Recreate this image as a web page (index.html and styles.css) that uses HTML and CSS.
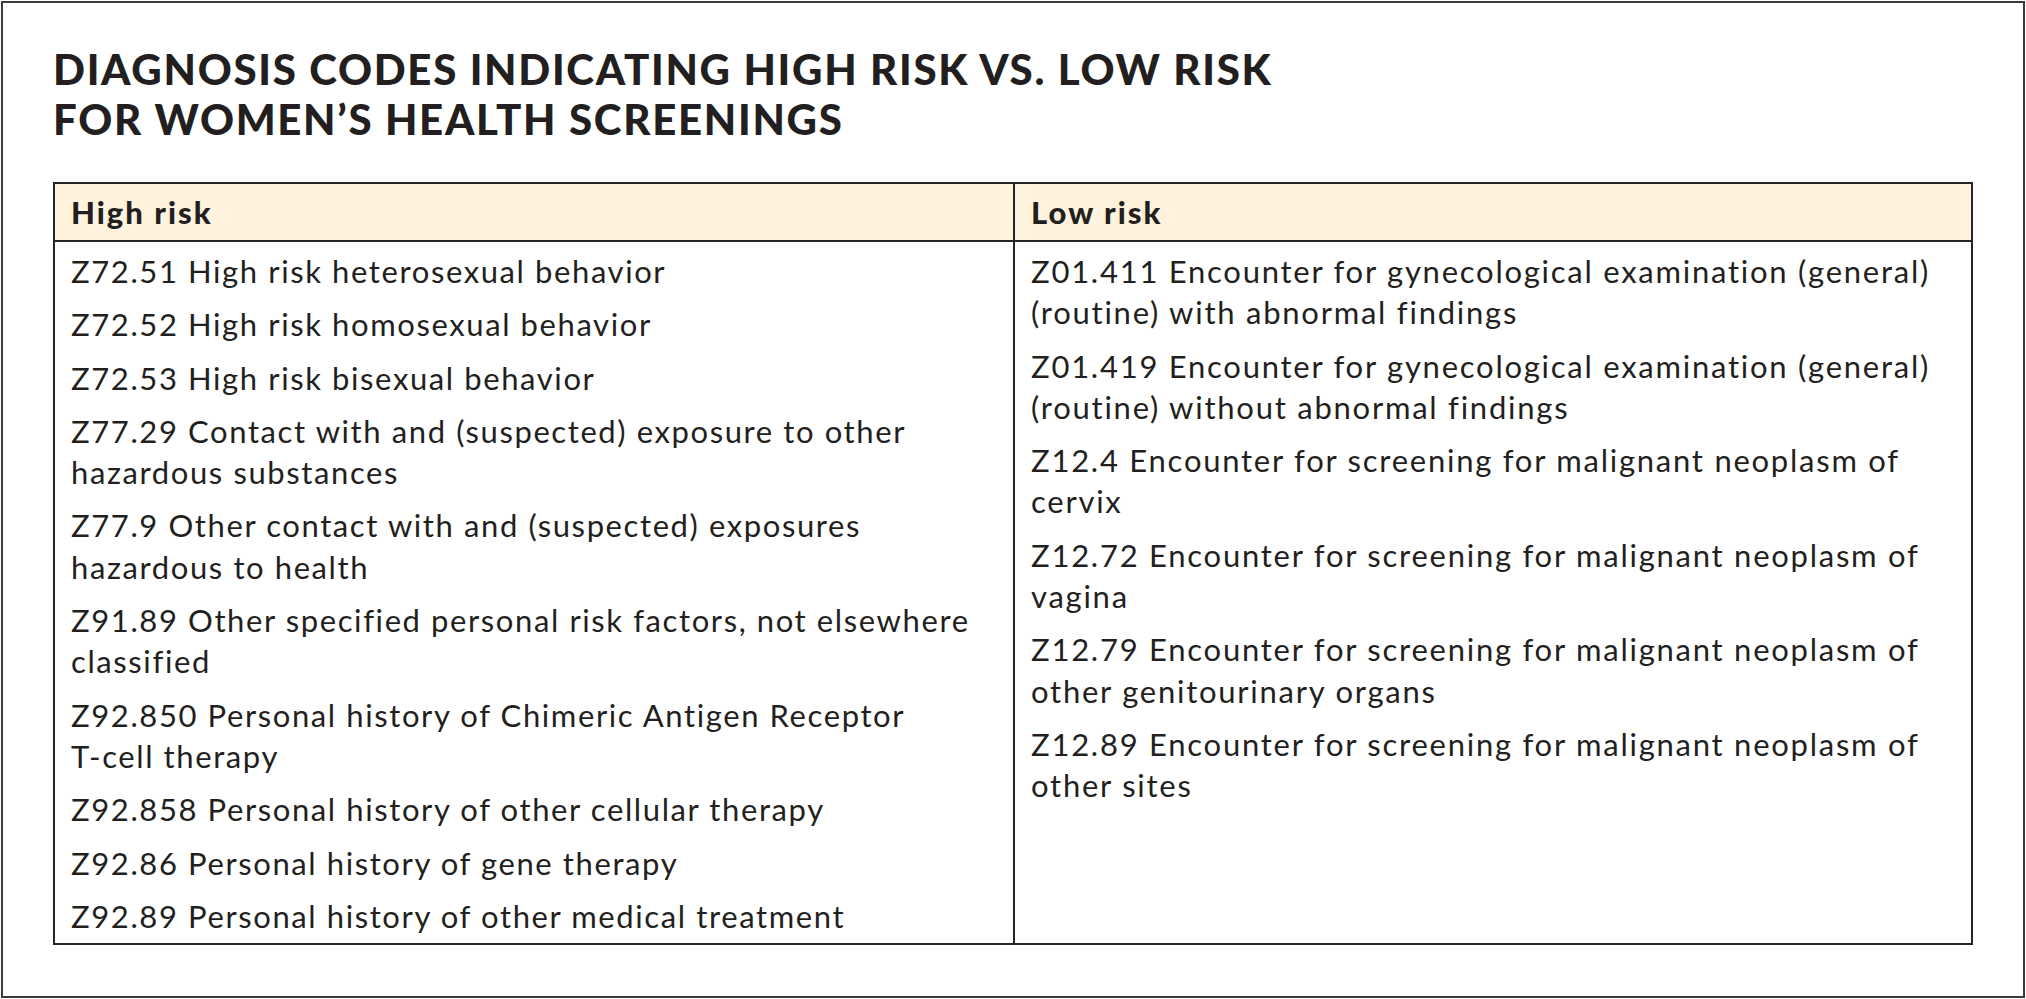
FILE: index.html
```html
<!DOCTYPE html>
<html lang="en">
<head>
<meta charset="utf-8">
<title>Diagnosis codes</title>
<link rel="stylesheet" href="styles.css">
</head>
<body>
<div class="frame">
  <h1 class="title">DIAGNOSIS CODES INDICATING HIGH RISK VS. LOW RISK<br>FOR WOMEN’S HEALTH SCREENINGS</h1>
  <div class="codes">
    <div class="head">High risk</div>
    <div class="head head-right">Low risk</div>
    <ul class="col">
      <li>Z72.51 High risk heterosexual behavior</li>
      <li>Z72.52 High risk homosexual behavior</li>
      <li>Z72.53 High risk bisexual behavior</li>
      <li>Z77.29 Contact with and (suspected) exposure to other<br>hazardous substances</li>
      <li>Z77.9 Other contact with and (suspected) exposures<br>hazardous to health</li>
      <li>Z91.89 Other specified personal risk factors, not elsewhere<br>classified</li>
      <li>Z92.850 Personal history of Chimeric Antigen Receptor<br>T-cell therapy</li>
      <li>Z92.858 Personal history of other cellular therapy</li>
      <li>Z92.86 Personal history of gene therapy</li>
      <li>Z92.89 Personal history of other medical treatment</li>
    </ul>
    <ul class="col col-right">
      <li>Z01.411 Encounter for gynecological examination (general)<br>(routine) with abnormal findings</li>
      <li>Z01.419 Encounter for gynecological examination (general)<br>(routine) without abnormal findings</li>
      <li>Z12.4 Encounter for screening for malignant neoplasm of<br>cervix</li>
      <li>Z12.72 Encounter for screening for malignant neoplasm of<br>vagina</li>
      <li>Z12.79 Encounter for screening for malignant neoplasm of<br>other genitourinary organs</li>
      <li>Z12.89 Encounter for screening for malignant neoplasm of<br>other sites</li>
    </ul>
  </div>
</div>
</body>
</html>
```
FILE: styles.css
```css
html, body {
  margin: 0;
  padding: 0;
  background: #ffffff;
}

.frame {
  box-sizing: border-box;
  margin: 1px;
  height: 997px;
  border: 2px solid #3a3a3a;
  padding: 41px 50px 0 50px;
  color: #231f20;
  font-family: Lato, "Open Sans", sans-serif;
}

.title {
  margin: 0 0 38px 0;
  font-family: Lato, sans-serif;
  font-weight: 900;
  font-size: 42px;
  line-height: 50px;
  letter-spacing: 1.7px;
  color: #231f20;
}

.codes {
  display: grid;
  grid-template-columns: 1fr 1fr;
  border: 2px solid #262626;
}

.head {
  background: #fff3dd;
  border-bottom: 2px solid #262626;
  height: 56px;
  display: flex;
  align-items: center;
  padding: 0 16px;
  font-family: Lato, sans-serif;
  font-weight: 900;
  font-size: 31px;
  letter-spacing: 2px;
}

.head-right,
.col-right {
  border-left: 2px solid #262626;
}

.col {
  list-style: none;
  margin: 0;
  padding: 9px 16px 6px 16px;
  display: flex;
  flex-direction: column;
  gap: 12px;
  font-size: 31px;
  line-height: 41.3px;
  letter-spacing: 1.6px;
}

.col-right {
  letter-spacing: 1.75px;
}

.col li {
  margin: 0;
  padding: 0;
}
```
